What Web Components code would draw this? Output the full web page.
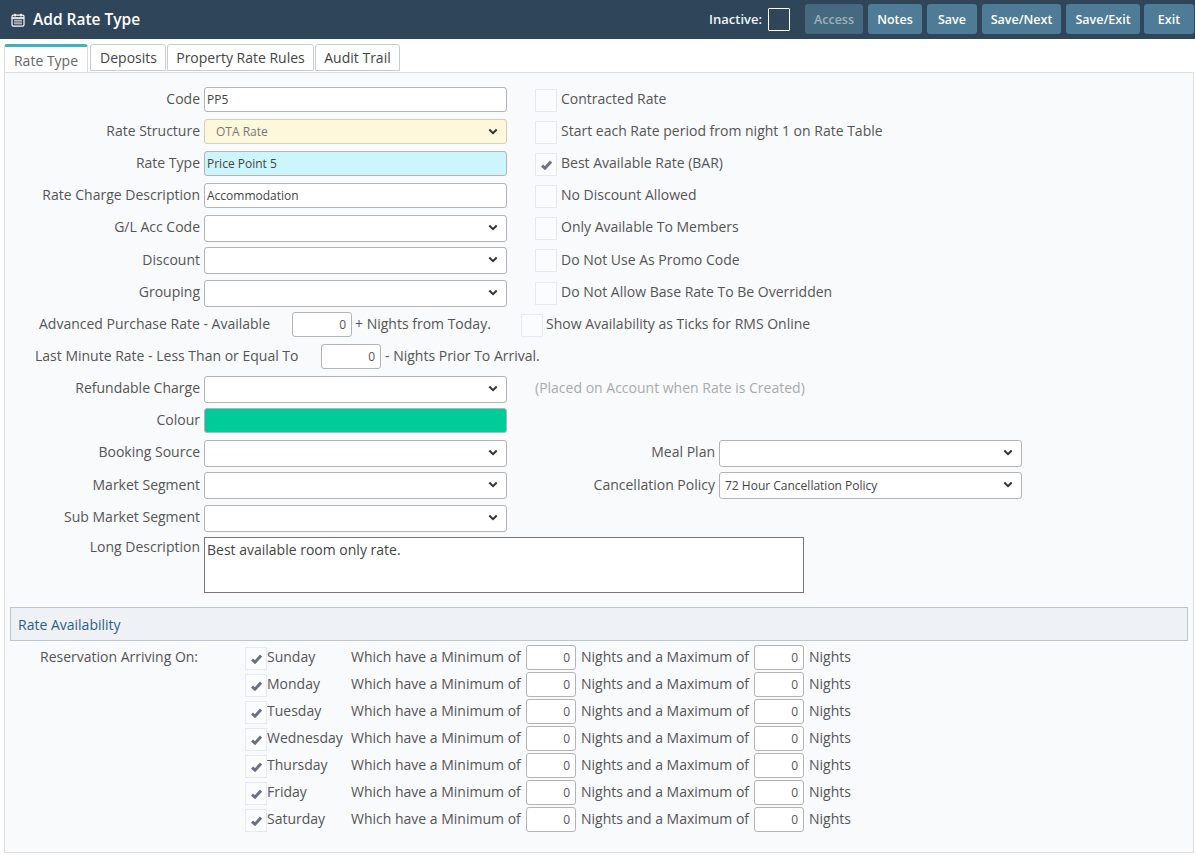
<!DOCTYPE html>
<html><head><meta charset="utf-8"><title>Add Rate Type</title>
<style>
html,body{margin:0;padding:0;background:#fff;font-family:"Open Sans",sans-serif;color:#555;font-size:14px}
</style></head><body>
<rate-app></rate-app>
<script>
const def=(name,css,html)=>customElements.define(name,class extends HTMLElement{
  connectedCallback(){ if(this.shadowRoot) return;
    const s=this.attachShadow({mode:'open'});
    s.innerHTML='<style>'+css+'</style>'+(typeof html==='function'?html(this):html);
  }
});
const a=(el,n,d='')=>el.getAttribute(n)??d;

def('app-header',`
:host{display:flex;align-items:center;height:39px;background:#2f4559;color:#fff;box-sizing:border-box;padding:0 1px 0 11px}
svg{width:14px;height:14px;margin-right:8px;flex:none}
h1{font:600 15.5px "Open Sans",sans-serif;margin:-2px 0 0;flex:1}
.in{font:600 13px "Open Sans",sans-serif;margin:-2px 6px 0 0;color:#f1f3f5}
.box{width:20px;height:21px;border:1px solid #fff;margin-right:15px;border-radius:1px}
.bar{display:flex;gap:5px;margin-top:-1px}
`,`<svg viewBox="0 0 14 14" fill="none" stroke="#fff"><rect x="1" y="2.2" width="12" height="11" rx="1.4" stroke-width="1.2"/><path d="M1 5h12" stroke-width="1.6"/><path d="M4 .8v2.6M10 .8v2.6" stroke-width="1.4"/><path d="M3.2 7.2h7.6M3.2 9h7.6M3.2 10.8h7.6" stroke-width="1.1" stroke-dasharray="1.6 .4"/></svg>
<h1>Add Rate Type</h1><span class="in">Inactive:</span><span class="box"></span><div class="bar"><slot></slot></div>`);

def('tool-button',`
:host{display:block;box-sizing:border-box;height:30px;border-radius:3px;background:#4e7b96;color:#fff;font:600 12.5px/31px "Open Sans",sans-serif;text-align:center}
:host([disabled]){background:#456a80;color:#9fb0bb}
`,`<slot></slot>`);

def('tab-bar',`:host{display:flex;padding:5px 0 0 4px;height:28px;position:relative;z-index:1;align-items:flex-start}`,`<slot></slot>`);
def('tab-item',`
:host{display:block;box-sizing:border-box;height:27px;border:1px solid #c9cdd0;border-radius:3px 3px 0 0;background:#fff;color:#444;font-size:14px;line-height:25px;text-align:center;margin-right:1px}
:host([active]){height:28px;border:1px solid #d8dbdd;border-top:3px solid #3fb3bd;border-bottom:0;margin-right:2px;line-height:27px;color:#666}
`,`<slot></slot>`);

def('form-panel',`
:host{display:block;box-sizing:border-box;margin:0 1px 0 4px;height:781px;border:1px solid #dcdfe2;background:#f9fafc;padding-top:14px}
`,`<slot></slot>`);

def('form-row',`
:host{display:flex;align-items:flex-start;height:32px}
:host([tall]){height:33px}
:host([long]){height:70px}
.l{box-sizing:border-box;width:195px;text-align:right;margin-right:4px;line-height:24px;white-space:nowrap;flex:none}
:host([tall]) .l{line-height:26px}
:host([long]) .l{line-height:20px}
.c{width:303px;flex:none}
.r{display:flex;flex:none;margin-left:28px}
`,el=>`<span class="l">${a(el,'label')}</span><div class="c"><slot></slot></div><div class="r"><slot name="right"></slot></div>`);

def('plain-row',`
:host{display:flex;align-items:flex-start;height:32px;line-height:24px;white-space:nowrap}
`,`<slot></slot>`);

def('text-box',`
:host{display:block;box-sizing:border-box;height:25px;border:1px solid #b4b4b4;border-radius:3px;background:#fff;font-size:12px;line-height:23px;padding:0 2px;color:#444;overflow:hidden;white-space:nowrap}
:host([tone=cyan]){background:#ccf6fb}
:host([tone=green]){background:#00cc99}
:host([num]){text-align:right;padding:0 5px 0 3px;color:#555;width:60px;flex:none}
:host([small]){width:50px}
:host([area]){width:600px;height:56px;border:1px solid #777;border-radius:0;font-size:14px;line-height:22px;padding:1px 2px;white-space:normal}
`,`<slot></slot>`);

def('select-box',`
:host{display:block;width:303px;height:27px;position:relative}
select{display:block;appearance:none;-webkit-appearance:none;width:100%;height:100%;box-sizing:border-box;border:1px solid #b4b4b4;border-radius:3px;background-color:#fff;font:12px "Open Sans",sans-serif;color:#444;padding:0 20px 0 5px;outline:0}
:host([tone=yellow]) select{background-color:#fdf8db;border-color:#d3d0b8;color:#777;padding-left:11px}
:host([tone=yellow]){height:25px}
svg{position:absolute;right:9px;top:50%;width:10px;height:7px;margin-top:-5px;pointer-events:none}
:host([tone=yellow]) svg{margin-top:-4px}
`,el=>`<select><option>${a(el,'value')}</option></select><svg viewBox="0 0 10 7"><path d="M1.3 1.5 5 5.2 8.7 1.5" fill="none" stroke="#333" stroke-width="2"/></svg>`);

def('check-box',`
:host{display:block;box-sizing:border-box;width:22px;height:23px;border:1px solid #e6e8f4;background:#fbfcfe;flex:none;position:relative}
svg{position:absolute;left:5px;top:6px;width:11px;height:10px}
`,el=>el.hasAttribute('checked')?`<svg viewBox="0 0 11 10"><path d="M1 5.6 4 8.2 10 1.6" fill="none" stroke="#6d6d86" stroke-width="2.9"/></svg>`:``);

def('check-line',`
:host{display:flex;height:24px;line-height:24px;white-space:nowrap}
:host([tall]){line-height:26px}
check-box{margin-top:2px}
span{margin-left:4px}
:host([tight]) span{margin-left:3px}
`,el=>`<check-box ${el.hasAttribute('checked')?'checked':''}></check-box><span><slot></slot></span>`);

def('section-bar',`
:host{display:block;box-sizing:border-box;height:34px;margin:0 5px;border:1px solid #bcc5cb;background:#eef1f6;color:#2f5f7e;line-height:33px;padding-left:7px}
`,`<slot></slot>`);

def('day-row',`
:host{display:flex;height:27px;line-height:24px;white-space:nowrap;align-items:flex-start}
.h{width:240px;padding-left:35px;box-sizing:border-box;flex:none}
.d{width:84px;flex:none}
.t1{width:175px;flex:none}
.t2{width:173px;margin-left:5px;flex:none}
.t3{margin-left:5px}
check-box{margin-top:2px}
`,el=>`<span class="h">${a(el,'head')}</span><check-box checked></check-box><span class="d">${a(el,'day')}</span><span class="t1">Which have a Minimum of</span><text-box num small>0</text-box><span class="t2">Nights and a Maximum of</span><text-box num small>0</text-box><span class="t3">Nights</span>`);

def('right-pair',`
:host{display:flex;margin-left:-28px}
span{width:208px;text-align:right;margin-right:4px;line-height:24px;white-space:nowrap}
:host([tall]) span{line-height:26px}
`,el=>`<span>${a(el,'label')}</span><select-box value="${a(el,'value')}"></select-box>`);

def('rate-app','',`
<app-header>
 <tool-button disabled style="width:58px">Access</tool-button>
 <tool-button style="width:54px">Notes</tool-button>
 <tool-button style="width:50px">Save</tool-button>
 <tool-button style="width:79px">Save/Next</tool-button>
 <tool-button style="width:74px">Save/Exit</tool-button>
 <tool-button style="width:50px;margin-left:-1px">Exit</tool-button>
</app-header>
<tab-bar>
 <tab-item active style="width:84px">Rate Type</tab-item>
 <tab-item style="width:76px;padding-left:1px">Deposits</tab-item>
 <tab-item style="width:147px">Property Rate Rules</tab-item>
 <tab-item style="width:85px">Audit Trail</tab-item>
</tab-bar>
<form-panel>
 <form-row label="Code"><text-box>PP5</text-box><check-line slot="right">Contracted Rate</check-line></form-row>
 <form-row label="Rate Structure"><select-box tone="yellow" value="OTA Rate"></select-box><check-line slot="right">Start each Rate period from night 1 on Rate Table</check-line></form-row>
 <form-row label="Rate Type"><text-box tone="cyan">Price Point 5</text-box><check-line slot="right" checked>Best Available Rate (BAR)</check-line></form-row>
 <form-row label="Rate Charge Description"><text-box>Accommodation</text-box><check-line slot="right">No Discount Allowed</check-line></form-row>
 <form-row label="G/L Acc Code"><select-box></select-box><check-line slot="right">Only Available To Members</check-line></form-row>
 <form-row tall label="Discount"><select-box></select-box><check-line slot="right" tall>Do Not Use As Promo Code</check-line></form-row>
 <form-row label="Grouping"><select-box></select-box><check-line slot="right">Do Not Allow Base Rate To Be Overridden</check-line></form-row>
 <plain-row style="padding-left:34px">
   <span style="width:253px;flex:none">Advanced Purchase Rate - Available</span><text-box num>0</text-box><span style="width:166px;margin-left:3px;flex:none">+ Nights from Today.</span><check-line tight>Show Availability as Ticks for RMS Online</check-line>
 </plain-row>
 <plain-row style="padding-left:30px">
   <span style="width:286px;flex:none">Last Minute Rate - Less Than or Equal To</span><text-box num>0</text-box><span style="margin-left:4px">- Nights Prior To Arrival.</span>
 </plain-row>
 <form-row label="Refundable Charge"><select-box></select-box><span slot="right" style="color:#aaa;line-height:24px;white-space:nowrap">(Placed on Account when Rate is Created)</span></form-row>
 <form-row label="Colour"><text-box tone="green"></text-box></form-row>
 <form-row label="Booking Source"><select-box></select-box><right-pair slot="right" label="Meal Plan"></right-pair></form-row>
 <form-row tall label="Market Segment"><select-box></select-box><right-pair slot="right" tall label="Cancellation Policy" value="72 Hour Cancellation Policy"></right-pair></form-row>
 <form-row label="Sub Market Segment"><select-box></select-box></form-row>
 <form-row long label="Long Description" style="width:900px"><text-box area>Best available room only rate.</text-box></form-row>
 <section-bar>Rate Availability</section-bar>
 <div style="height:4px"></div>
 <day-row head="Reservation Arriving On:" day="Sunday"></day-row>
 <day-row day="Monday"></day-row>
 <day-row day="Tuesday"></day-row>
 <day-row day="Wednesday"></day-row>
 <day-row day="Thursday"></day-row>
 <day-row day="Friday"></day-row>
 <day-row day="Saturday"></day-row>
</form-panel>`);
</script>
</body></html>
